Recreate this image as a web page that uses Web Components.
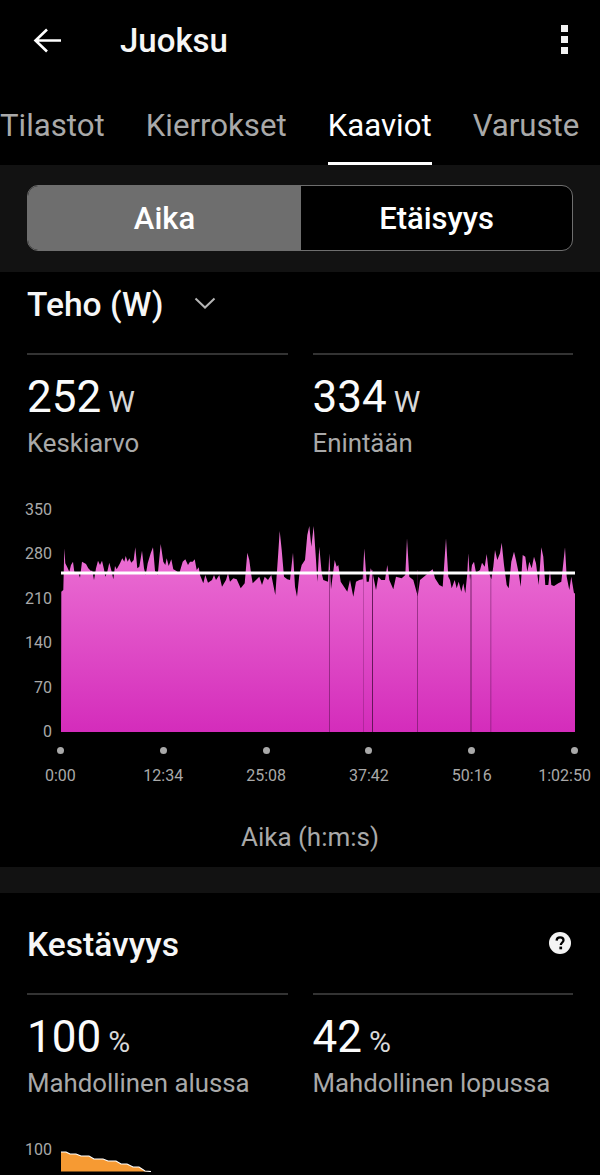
<!DOCTYPE html>
<html lang="fi">
<head>
<meta charset="utf-8">
<title>Juoksu</title>
<style>
  html, body { margin: 0; background: #000; }
  body { width: 600px; height: 1175px; overflow: hidden; font-family: Roboto, "Liberation Sans", sans-serif; color: #fff; }
</style>
</head>
<body>
<app-header title="Juoksu"></app-header>
<tab-bar></tab-bar>
<segment-toggle></segment-toggle>

<metric-section heading="Teho (W)" dropdown>
  <stat-pair value-a="252" unit-a="W" label-a="Keskiarvo" value-b="334" unit-b="W" label-b="Enintään"></stat-pair>
  <power-chart></power-chart>
</metric-section>

<section-gap></section-gap>

<metric-section heading="Kestävyys" help class="second">
  <stat-pair value-a="100" unit-a="%" label-a="Mahdollinen alussa" value-b="42" unit-b="%" label-b="Mahdollinen lopussa"></stat-pair>
  <stamina-chart></stamina-chart>
</metric-section>

<script>
  /**
   * Top bar with back arrow, title and overflow menu.
   */
  customElements.define('app-header', class extends HTMLElement {
    constructor () {
      super()
      this.attachShadow({ mode: 'open' }).innerHTML = `
        <style>
          :host { display: flex; align-items: center; height: 80px; padding: 0 32px 0 33px; }
          svg { display: block; flex: none; }
          h1 { flex: 1; margin: 0 0 0 59px; font: 500 33px/1 Roboto, sans-serif; color: #f6f6f6; }
          .menu { display: flex; flex-direction: column; gap: 4px; margin-top: -2px; }
          .menu i { display: block; width: 7px; height: 7px; background: #f2f2f2; }
        </style>
        <svg width="28" height="27" viewBox="0 0 28 27" fill="none" stroke="#fff" stroke-width="2.6">
          <path d="M28 13.5H3M14 2.5L2.5 13.5L14 24.5"/>
        </svg>
        <h1></h1>
        <div class="menu"><i></i><i></i><i></i></div>`
      this.shadowRoot.querySelector('h1').textContent = this.getAttribute('title')
      this.removeAttribute('title')
    }
  })

  /**
   * Horizontal tabs, the third one selected.
   */
  customElements.define('tab-bar', class extends HTMLElement {
    constructor () {
      super()
      this.attachShadow({ mode: 'open' }).innerHTML = `
        <style>
          :host { display: flex; gap: 41px; height: 85px; box-sizing: border-box; overflow: hidden; }
          div { height: 85px; box-sizing: border-box; padding-top: 26px; font: 400 31.2px/40px Roboto, sans-serif; color: #a9a9a9; white-space: nowrap; }
          .on { color: #fff; border-bottom: 3px solid #fff; }
        </style>
        <div>Tilastot</div><div>Kierrokset</div><div class="on">Kaaviot</div><div>Varuste</div>`
    }
  })

  /**
   * Two part switch between time and distance.
   */
  customElements.define('segment-toggle', class extends HTMLElement {
    constructor () {
      super()
      this.attachShadow({ mode: 'open' }).innerHTML = `
        <style>
          :host { display: block; background: #121212; padding: 20px 27px 21px; height: 66px; }
          .box { display: flex; height: 66px; box-sizing: border-box; border: 1px solid #6e6e6e; border-radius: 11px; overflow: hidden; background: #000; }
          div div { flex: 1; display: flex; align-items: center; justify-content: center; font: 500 31px/1 Roboto, sans-serif; color: #fff; }
          .on { background: #6e6e6e; flex: 0 0 273px; }
        </style>
        <div class="box"><div class="on">Aika</div><div>Etäisyys</div></div>`
    }
  })

  /**
   * A metric block with heading and slotted content.
   */
  customElements.define('metric-section', class extends HTMLElement {
    constructor () {
      super()
      const extra = this.hasAttribute('dropdown')
        ? `<svg class="chev" width="22" height="12" viewBox="0 0 22 12" fill="none" stroke="#b5b5b5" stroke-width="2"><path d="M1.5 1.5L11 10.5L20.5 1.5"/></svg>`
        : this.hasAttribute('help')
          ? `<svg class="help" width="22" height="22" viewBox="0 0 22 22"><circle cx="11" cy="11" r="11" fill="#f4f4f4"/><path d="M7.6 8.6C7.7 6.6 9.1 5.4 11.1 5.4C13.1 5.4 14.5 6.6 14.5 8.2C14.5 10.4 11.8 10.6 11.8 13" fill="none" stroke="#000" stroke-width="2.3"/><rect x="10.4" y="14.6" width="2.7" height="2.7" fill="#000"/></svg>`
          : ''
      this.attachShadow({ mode: 'open' }).innerHTML = `
        <style>
          :host { display: block; padding: 0 27px; }
          header { display: flex; align-items: center; height: 81px; padding-bottom: 15px; box-sizing: border-box; }
          h2 { margin: 0; font: 500 33.6px/34px Roboto, sans-serif; color: #f6f6f6; }
          .chev { margin-left: 30px; margin-top: -4px; }
          .help { margin-left: auto; margin-right: 2px; margin-bottom: 8px; }
          :host(.second) header { height: 100px; align-items: flex-end; padding-bottom: 31px; }
        </style>
        <header><h2></h2>${extra}</header>
        <slot></slot>`
      this.shadowRoot.querySelector('h2').textContent = this.getAttribute('heading')
    }
  })

  /**
   * Two summary numbers side by side.
   */
  customElements.define('stat-pair', class extends HTMLElement {
    constructor () {
      super()
      const cell = k => `
        <div class="cell">
          <div class="num">${this.getAttribute('value-' + k)}<small>${this.getAttribute('unit-' + k)}</small></div>
          <div class="lab">${this.getAttribute('label-' + k)}</div>
        </div>`
      this.attachShadow({ mode: 'open' }).innerHTML = `
        <style>
          :host { display: flex; gap: 25px; }
          .cell { flex: 1; border-top: 2px solid #333; height: 110px; box-sizing: border-box; }
          .num { font: 400 44px/50px Roboto, sans-serif; color: #fbfbfb; margin-top: 17px; white-space: nowrap; }
          small { font-size: 30px; color: #d8d8d8; margin-left: 7px; }
          .lab { font: 400 25.8px/30px Roboto, sans-serif; color: #a9a9a9; margin-top: 1px; white-space: nowrap; }
        </style>
        ${cell('a')}${cell('b')}`
    }
  })

  // Outline of the power curve, read off 3x crops of the reference: [x0, y0, points].
  const curve = [
    [60, 530, [[4,185],[10,180],[13,55],[16,100],[22,112],[28,125],[33,105],[39,95],[43,125],[55,128],[60,143],[66,95],[78,102],[85,115],[92,122],[97,122],[102,150],[108,115],[114,92],[120,105],[126,92],[132,118],[136,140],[142,125],[148,98],[155,125],[160,148],[165,108],[170,118],[180,100],[187,85],[193,95],[197,78],[203,95],[208,85],[214,98],[221,90],[226,52],[232,115],[238,110],[246,62],[252,115],[257,135],[263,100],[272,70],[279,52],[285,122],[293,135],[302,42],[310,95],[316,105],[320,85],[326,108],[334,88],[340,118],[348,122],[358,130],[368,95],[376,88],[384,105]]],
    [190, 520, [[0,125],[8,125],[14,118],[20,150],[26,142],[30,165],[40,190],[46,165],[54,188],[66,180],[72,165],[78,180],[88,165],[96,200],[108,180],[114,160],[120,185],[130,175],[140,178],[152,205],[164,190],[172,98],[178,120],[184,165],[188,190],[198,180],[208,170],[216,195],[224,170],[234,180],[244,165],[256,225],[264,110],[269,33],[275,90],[282,170],[292,178],[300,180],[309,98],[315,200],[321,230],[328,165],[335,135],[345,120],[352,45],[358,18],[364,80],[371,18],[378,120],[382,185],[388,80]]],
    [320, 530, [[5,130],[10,150],[24,155],[28,70],[33,178],[44,90],[50,110],[55,105],[62,155],[72,170],[82,185],[90,150],[100,200],[108,155],[118,150],[128,148],[133,55],[140,155],[146,155],[152,115],[158,130],[168,180],[175,140],[184,150],[195,150],[202,105],[208,150],[220,178],[228,140],[245,145],[256,135],[261,25],[268,140],[280,150],[293,198],[300,150],[318,135],[328,125],[338,118],[345,145],[358,165],[368,170],[378,25],[385,140]]],
    [450, 530, [[0,150],[5,175],[14,150],[20,175],[26,155],[34,185],[40,160],[46,190],[52,130],[55,70],[60,150],[66,105],[72,95],[78,128],[90,120],[96,98],[104,110],[110,72],[116,125],[124,148],[130,110],[135,60],[142,90],[150,70],[155,38],[162,105],[170,165],[176,175],[184,95],[192,65],[198,90],[206,130],[212,170],[218,75],[226,80],[232,125],[238,95],[245,115],[252,80],[258,100],[266,165],[274,52],[280,80],[286,165],[295,165],[300,120],[304,165],[312,168],[325,160],[334,155],[345,52],[350,140],[358,180],[364,140],[372,190],[375,190]]]
  ]

  /**
   * Power area chart. The plot is 514 wide, its top (y 0) at page y 510.
   */
  customElements.define('power-chart', class extends HTMLElement {
    constructor () {
      super()
      const outline = curve.flatMap(([x0, y0, list]) =>
        list.map(p => `${(x0 + p[0] / 3 - 61).toFixed(1)},${(y0 + p[1] / 3 - 510).toFixed(1)}`))
      const pts = ['0,222', ...outline, '514,222'].join(' ')
      const gaps = [[268, 0.75, 0.7], [302, 0.75, 0.4], [311, 1, 0.9], [356, 0.75, 0.7], [409.5, 1, 0.8], [429.5, 0.75, 0.6]]
        .map(g => `<rect x="${g[0]}" y="60" width="${g[1]}" height="162" fill="#5a1450" opacity="${g[2]}"/>`).join('')
      const ys = ['350', '280', '210', '140', '70', '0'].map(t => `<span>${t}</span>`).join('')
      const xs = ['0:00', '12:34', '25:08', '37:42', '50:16', '1:02:50']
      this.attachShadow({ mode: 'open' }).innerHTML = `
        <style>
          :host { display: block; margin: 0 -27px; padding-top: 49px; height: 404px; box-sizing: border-box; }
          .plot { display: flex; align-items: stretch; }
          .y { width: 52px; height: 242px; margin-top: -12px; display: flex; flex-direction: column; justify-content: space-between; align-items: flex-end; font: 400 16px/20px Roboto, sans-serif; color: #a9a9a9; }
          svg.area { display: block; margin: -2px 0 0 9px; }
          .ticks { display: grid; grid-template-columns: repeat(6, 1fr); width: 617px; margin: 5px 0 0 9px; }
          .t { display: flex; flex-direction: column; align-items: center; font: 400 16px/20px Roboto, sans-serif; color: #a9a9a9; white-space: nowrap; }
          .t i { display: block; width: 7px; height: 7px; border-radius: 50%; background: #a9a9a9; margin-bottom: 12px; }
          .t.last span { position: relative; left: -10px; }
          .axis { margin-top: 36px; text-align: center; font: 400 26px/30px Roboto, sans-serif; color: #a9a9a9; padding-left: 20px; }
        </style>
        <div class="plot">
          <div class="y">${ys}</div>
          <svg class="area" width="514" height="222" viewBox="0 0 514 222">
            <defs><linearGradient id="g" x1="0" y1="0" x2="0" y2="1">
              <stop offset="0" stop-color="#ee78d6"/><stop offset="1" stop-color="#d42cbb"/>
            </linearGradient></defs>
            <polygon points="${pts}" fill="url(#g)"/>
            ${gaps}
            <rect x="0" y="61.5" width="514" height="3" fill="#fff"/>
          </svg>
        </div>
        <div class="ticks">${xs.map((t, i) => `<div class="t${i === 5 ? ' last' : ''}"><i></i><span>${t}</span></div>`).join('')}</div>
        <div class="axis">Aika (h:m:s)</div>`
    }
  })

  /**
   * Grey strip between two sections.
   */
  customElements.define('section-gap', class extends HTMLElement {
    constructor () {
      super()
      this.attachShadow({ mode: 'open' }).innerHTML = `<style>:host { display: block; height: 26px; background: #121212; }</style>`
    }
  })

  /**
   * Start of the stamina chart; the screenshot cuts it off.
   */
  customElements.define('stamina-chart', class extends HTMLElement {
    constructor () {
      super()
      this.attachShadow({ mode: 'open' }).innerHTML = `
        <style>
          :host { display: flex; margin: 0 -27px; height: 60px; padding-top: 37px; box-sizing: border-box; }
          span { width: 52px; text-align: right; font: 400 16px/20px Roboto, sans-serif; color: #a9a9a9; }
          svg { display: block; margin: 11px 0 0 9px; }
        </style>
        <span>100</span>
        <svg width="92" height="21" viewBox="0 0 92 21">
          <polygon points="0,1 5,1 9,3 15,3 20,5 28,5 33,8 42,8 47,10 55,10 60,13 66,13 72,16 78,16 84,20 90,20.5 0,20.5" fill="#f69a33"/>
          <polyline points="0,1 5,1 9,3 15,3 20,5 28,5 33,8 42,8 47,10 55,10 60,13 66,13 72,16 78,16 84,20 90,20.5" fill="none" stroke="#fff" stroke-width="1.2"/>
        </svg>`
    }
  })
</script>
</body>
</html>
